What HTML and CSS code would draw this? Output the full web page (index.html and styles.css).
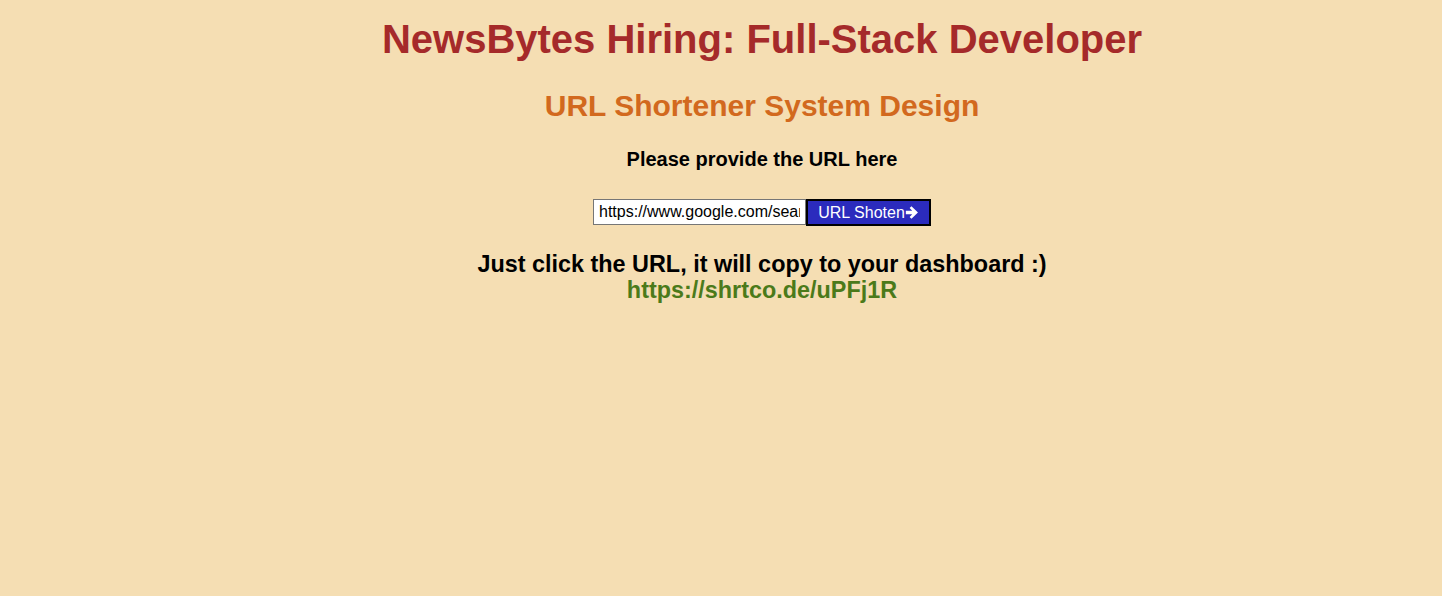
FILE: index.html
```html
<!DOCTYPE html>
<html>
<head>
<meta charset="utf-8">
<link rel="stylesheet" href="styles.css">
</head>
<body>
<main class="page">
  <h1 class="title">NewsBytes Hiring: Full-Stack Developer</h1>
  <h2 class="subtitle">URL Shortener System Design</h2>
  <p class="prompt">Please provide the URL here</p>
  <form class="form">
    <input class="url-input" type="text" value="https://www.google.com/search?q=url+shortener">
    <button class="submit" type="button">URL Shoten<svg class="arrow" viewBox="0 0 12 12" width="14" height="13"><path fill="currentColor" d="M0.3 4.3H6.2L3.8 1.9L5.5 0.3L11.5 6L5.5 11.7L3.8 10.1L6.2 7.7H0.3Z"/></svg></button>
  </form>
  <p class="note">Just click the URL, it will copy to your dashboard :)</p>
  <a class="short-link" href="#">https://shrtco.de/uPFj1R</a>
</main>
</body>
</html>
```
FILE: styles.css
```css
html, body {
  margin: 0;
  background: #f5deb3;
  font-family: "Liberation Sans", Arial, sans-serif;
}
.page {
  display: flex;
  flex-direction: column;
  align-items: center;
  padding-left: 82px;
  padding-top: 17px;
}
.title {
  margin: 0;
  font-size: 40px;
  font-weight: bold;
  color: #a52a2a;
  line-height: 44px;
}
.subtitle {
  margin: 28px 0 0;
  font-size: 30px;
  font-weight: bold;
  color: #d2691e;
  line-height: 34px;
}
.prompt {
  margin: 24px 0 0;
  font-size: 20px;
  font-weight: bold;
  line-height: 24px;
}
.form {
  display: flex;
  margin-top: 28px;
}
.url-input {
  box-sizing: border-box;
  width: 213px;
  height: 26px;
  padding: 1px 5px;
  border: 1px solid #767676;
  font-family: "Liberation Sans", Arial, sans-serif;
  font-size: 16px;
  color: #000;
  background: #fff;
}
.submit {
  box-sizing: border-box;
  height: 27px;
  width: 125px;
  display: flex;
  align-items: center;
  justify-content: center;
  padding: 0 4px;
  border: 2px solid #000;
  background: #2b2bbd;
  color: #fff;
  font-family: "Liberation Sans", Arial, sans-serif;
  font-size: 16px;
}
.arrow {
  flex-shrink: 0;
  margin-left: 0;
}
.note {
  margin: 26px 0 0;
  font-size: 23.4px;
  font-weight: bold;
  line-height: 25px;
}
.short-link {
  margin-top: 1px;
  font-size: 23.4px;
  font-weight: bold;
  line-height: 25px;
  color: #4b7a1a;
  text-decoration: none;
}
```
